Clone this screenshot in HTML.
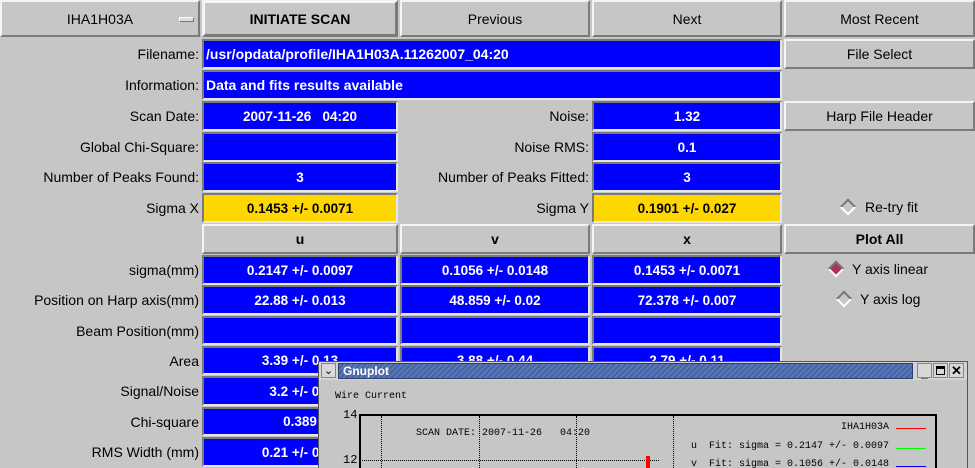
<!DOCTYPE html><html><head><style>
body{margin:0;width:975px;height:468px;background:#c6c6c6;position:relative;overflow:hidden;font-family:"Liberation Sans",sans-serif;font-size:14px}
.a{position:absolute;box-sizing:border-box}
.btn{background:#c6c6c6;border:2px solid;border-color:#f4f4f4 #7a7a7a #7a7a7a #f4f4f4;display:flex;align-items:center;justify-content:center;color:#000}
.lab{text-align:right;color:#000;display:flex;align-items:center;justify-content:flex-end}
.f{background:#0000ff;border:2px solid;border-color:#7a7a7a #e6e6e6 #e6e6e6 #7a7a7a;color:#fff;font-weight:bold;font-size:13.5px;display:flex;align-items:center;justify-content:center}
.y{background:#ffd700;color:#000}
.l{justify-content:flex-start;padding-left:2px}
.mono{font-family:"Liberation Mono",monospace;font-size:10px;color:#000;white-space:pre}
</style></head><body>
<div class="a btn" style="left:0;top:0;width:200px;height:37px">IHA1H03A<span class="a" style="left:177px;top:15px;width:15px;height:5px;background:#ddd;border:1px solid;border-color:#fff #777 #777 #fff"></span></div>
<div class="a btn" style="left:202px;top:0;width:196px;height:37px;border-width:3px;font-weight:bold">INITIATE SCAN</div>
<div class="a btn" style="left:400px;top:0;width:190px;height:37px">Previous</div>
<div class="a btn" style="left:592px;top:0;width:190px;height:37px">Next</div>
<div class="a btn" style="left:784px;top:0;width:191px;height:37px">Most Recent</div>

<div class="a lab" style="left:0;top:39px;width:199px;height:30px">Filename:</div>
<div class="a f l" style="left:202px;top:39px;width:580px;height:30px;font-size:14px">/usr/opdata/profile/IHA1H03A.11262007_04:20</div>
<div class="a btn" style="left:784px;top:39px;width:191px;height:30px">File Select</div>
<div class="a lab" style="left:0;top:70px;width:199px;height:30px">Information:</div>
<div class="a f l" style="left:202px;top:70px;width:580px;height:30px;font-size:14px">Data and fits results available</div>

<div class="a lab" style="left:0;top:101px;width:199px;height:30px">Scan Date:</div>
<div class="a f" style="left:202px;top:101px;width:196px;height:30px">2007-11-26&nbsp;&nbsp; 04:20</div>
<div class="a lab" style="left:400px;top:101px;width:189px;height:30px">Noise:</div>
<div class="a f" style="left:592px;top:101px;width:190px;height:30px">1.32</div>
<div class="a btn" style="left:784px;top:101px;width:191px;height:30px">Harp File Header</div>

<div class="a lab" style="left:0;top:132px;width:199px;height:30px">Global Chi-Square:</div>
<div class="a f" style="left:202px;top:132px;width:196px;height:30px"></div>
<div class="a lab" style="left:400px;top:132px;width:189px;height:30px">Noise RMS:</div>
<div class="a f" style="left:592px;top:132px;width:190px;height:30px">0.1</div>

<div class="a lab" style="left:0;top:162px;width:199px;height:30px">Number of Peaks Found:</div>
<div class="a f" style="left:202px;top:162px;width:196px;height:30px">3</div>
<div class="a lab" style="left:400px;top:162px;width:189px;height:30px">Number of Peaks Fitted:</div>
<div class="a f" style="left:592px;top:162px;width:190px;height:30px">3</div>

<div class="a lab" style="left:0;top:193px;width:199px;height:30px">Sigma X</div>
<div class="a f y" style="left:202px;top:193px;width:196px;height:30px">0.1453 +/- 0.0071</div>
<div class="a lab" style="left:400px;top:193px;width:189px;height:30px">Sigma Y</div>
<div class="a f y" style="left:592px;top:193px;width:190px;height:30px">0.1901 +/- 0.027</div>
<div class="a" style="left:842px;top:201px;width:12px;height:12px;transform:rotate(45deg);border:2px solid;border-color:#777 #fff #fff #777;background:#c6c6c6"></div>
<div class="a" style="left:865px;top:199px">Re-try fit</div>

<div class="a btn" style="left:202px;top:224px;width:196px;height:30px;font-weight:bold">u</div>
<div class="a btn" style="left:400px;top:224px;width:190px;height:30px;font-weight:bold">v</div>
<div class="a btn" style="left:592px;top:224px;width:190px;height:30px;font-weight:bold">x</div>
<div class="a btn" style="left:784px;top:224px;width:191px;height:30px;font-weight:bold">Plot All</div>

<div class="a lab" style="left:0;top:255px;width:199px;height:30px">sigma(mm)</div>
<div class="a f" style="left:202px;top:255px;width:196px;height:30px">0.2147 +/- 0.0097</div>
<div class="a f" style="left:400px;top:255px;width:190px;height:30px">0.1056 +/- 0.0148</div>
<div class="a f" style="left:592px;top:255px;width:190px;height:30px">0.1453 +/- 0.0071</div>
<div class="a" style="left:830px;top:263px;width:12px;height:12px;transform:rotate(45deg);border:2px solid;border-color:#777 #fff #fff #777;background:#b03060"></div>
<div class="a" style="left:852px;top:261px">Y axis linear</div>

<div class="a lab" style="left:0;top:285px;width:199px;height:30px">Position on Harp axis(mm)</div>
<div class="a f" style="left:202px;top:285px;width:196px;height:30px">22.88 +/- 0.013</div>
<div class="a f" style="left:400px;top:285px;width:190px;height:30px">48.859 +/- 0.02</div>
<div class="a f" style="left:592px;top:285px;width:190px;height:30px">72.378 +/- 0.007</div>
<div class="a" style="left:838px;top:293px;width:12px;height:12px;transform:rotate(45deg);border:2px solid;border-color:#777 #fff #fff #777;background:#c6c6c6"></div>
<div class="a" style="left:860px;top:291px">Y axis log</div>

<div class="a lab" style="left:0;top:316px;width:199px;height:29px">Beam Position(mm)</div>
<div class="a f" style="left:202px;top:316px;width:196px;height:29px"></div>
<div class="a f" style="left:400px;top:316px;width:190px;height:29px"></div>
<div class="a f" style="left:592px;top:316px;width:190px;height:29px"></div>

<div class="a lab" style="left:0;top:346px;width:199px;height:29px">Area</div>
<div class="a f" style="left:202px;top:346px;width:196px;height:29px">3.39 +/- 0.13</div>
<div class="a f" style="left:400px;top:346px;width:190px;height:29px">3.88 +/- 0.44</div>
<div class="a f" style="left:592px;top:346px;width:190px;height:29px">2.79 +/- 0.11</div>

<div class="a lab" style="left:0;top:376px;width:199px;height:30px">Signal/Noise</div>
<div class="a f" style="left:202px;top:376px;width:196px;height:30px">3.2 +/- 0.1</div>
<div class="a lab" style="left:0;top:407px;width:199px;height:29px">Chi-square</div>
<div class="a f" style="left:202px;top:407px;width:196px;height:29px">0.389</div>
<div class="a lab" style="left:0;top:437px;width:199px;height:30px">RMS Width (mm)</div>
<div class="a f" style="left:202px;top:437px;width:196px;height:30px">0.21 +/- 0.01</div>

<!-- gnuplot window -->
<div class="a" style="left:966px;top:376px;width:9px;height:92px;background:#c6c6c6;border-left:2px solid #f4f4f4"></div>
<div class="a" style="left:318px;top:361px;width:650px;height:107px;background:#c6c6c6;border:1px solid #555;border-bottom:none;overflow:hidden">
 <div class="a" style="left:0;top:0;width:648px;height:18px;background:#d4d4d4"></div>
 <div class="a" style="left:2px;top:1px;width:15px;height:15px;background:#d8d8d8;border:1px solid #888;font-size:11px;text-align:center;line-height:14px">&#8964;</div>
 <div class="a" style="left:19px;top:1px;width:575px;height:16px;background:repeating-linear-gradient(135deg,#5a78b4 0 2px,#4563a5 2px 4px);border:1px solid #2a3f70;color:#fff;font-weight:bold;font-size:12px;padding-left:4px;line-height:14px">Gnuplot</div>
 <div class="a" style="left:598px;top:1px;width:15px;height:15px;background:#d8d8d8;border:1px solid #888;font-size:12px;text-align:center;line-height:18px;font-weight:bold">_</div>
 <div class="a" style="left:614px;top:1px;width:15px;height:15px;background:#d8d8d8;border:1px solid #888"><div class="a" style="left:2px;top:2px;width:9px;height:9px;border:1px solid #000;border-top-width:3px"></div></div>
 <div class="a" style="left:630px;top:1px;width:15px;height:15px;background:#d8d8d8;border:1px solid #888;font-size:13px;text-align:center;line-height:14px;font-weight:bold">&#10005;</div>
 <div class="a mono" style="left:16px;top:29px">Wire Current</div>
 <div class="a mono" style="left:24px;top:46px;font-size:12px">14</div>
 <div class="a mono" style="left:24px;top:91px;font-size:12px">12</div>
 <div class="a" style="left:40px;top:52px;width:578px;height:70px;border:2px solid #000;border-bottom:none"></div>
 <div class="a" style="left:40px;top:98px;width:300px;border-top:1px dotted #000"></div>
 <div class="a" style="left:62px;top:54px;height:60px;border-left:1px dotted #000"></div>
 <div class="a" style="left:160px;top:54px;height:60px;border-left:1px dotted #000"></div>
 <div class="a" style="left:257px;top:54px;height:60px;border-left:1px dotted #000"></div>
 <div class="a" style="left:354px;top:54px;height:60px;border-left:1px dotted #000"></div>
 <div class="a" style="left:327px;top:94px;width:4px;height:20px;background:#f00"></div>
 <div class="a mono" style="left:97px;top:66px">SCAN DATE: 2007-11-26   04:20</div>
 <div class="a mono" style="left:522px;top:60px">IHA1H03A</div>
 <div class="a" style="left:577px;top:66px;width:30px;border-top:1px solid #f00"></div>
 <div class="a mono" style="left:372px;top:79px">u  Fit: sigma = 0.2147 +/- 0.0097</div>
 <div class="a" style="left:577px;top:86px;width:30px;border-top:1px solid #0f0"></div>
 <div class="a mono" style="left:372px;top:97px">v  Fit: sigma = 0.1056 +/- 0.0148</div>
 <div class="a" style="left:577px;top:104px;width:30px;border-top:1px solid #00f"></div>
</div>
</body></html>
